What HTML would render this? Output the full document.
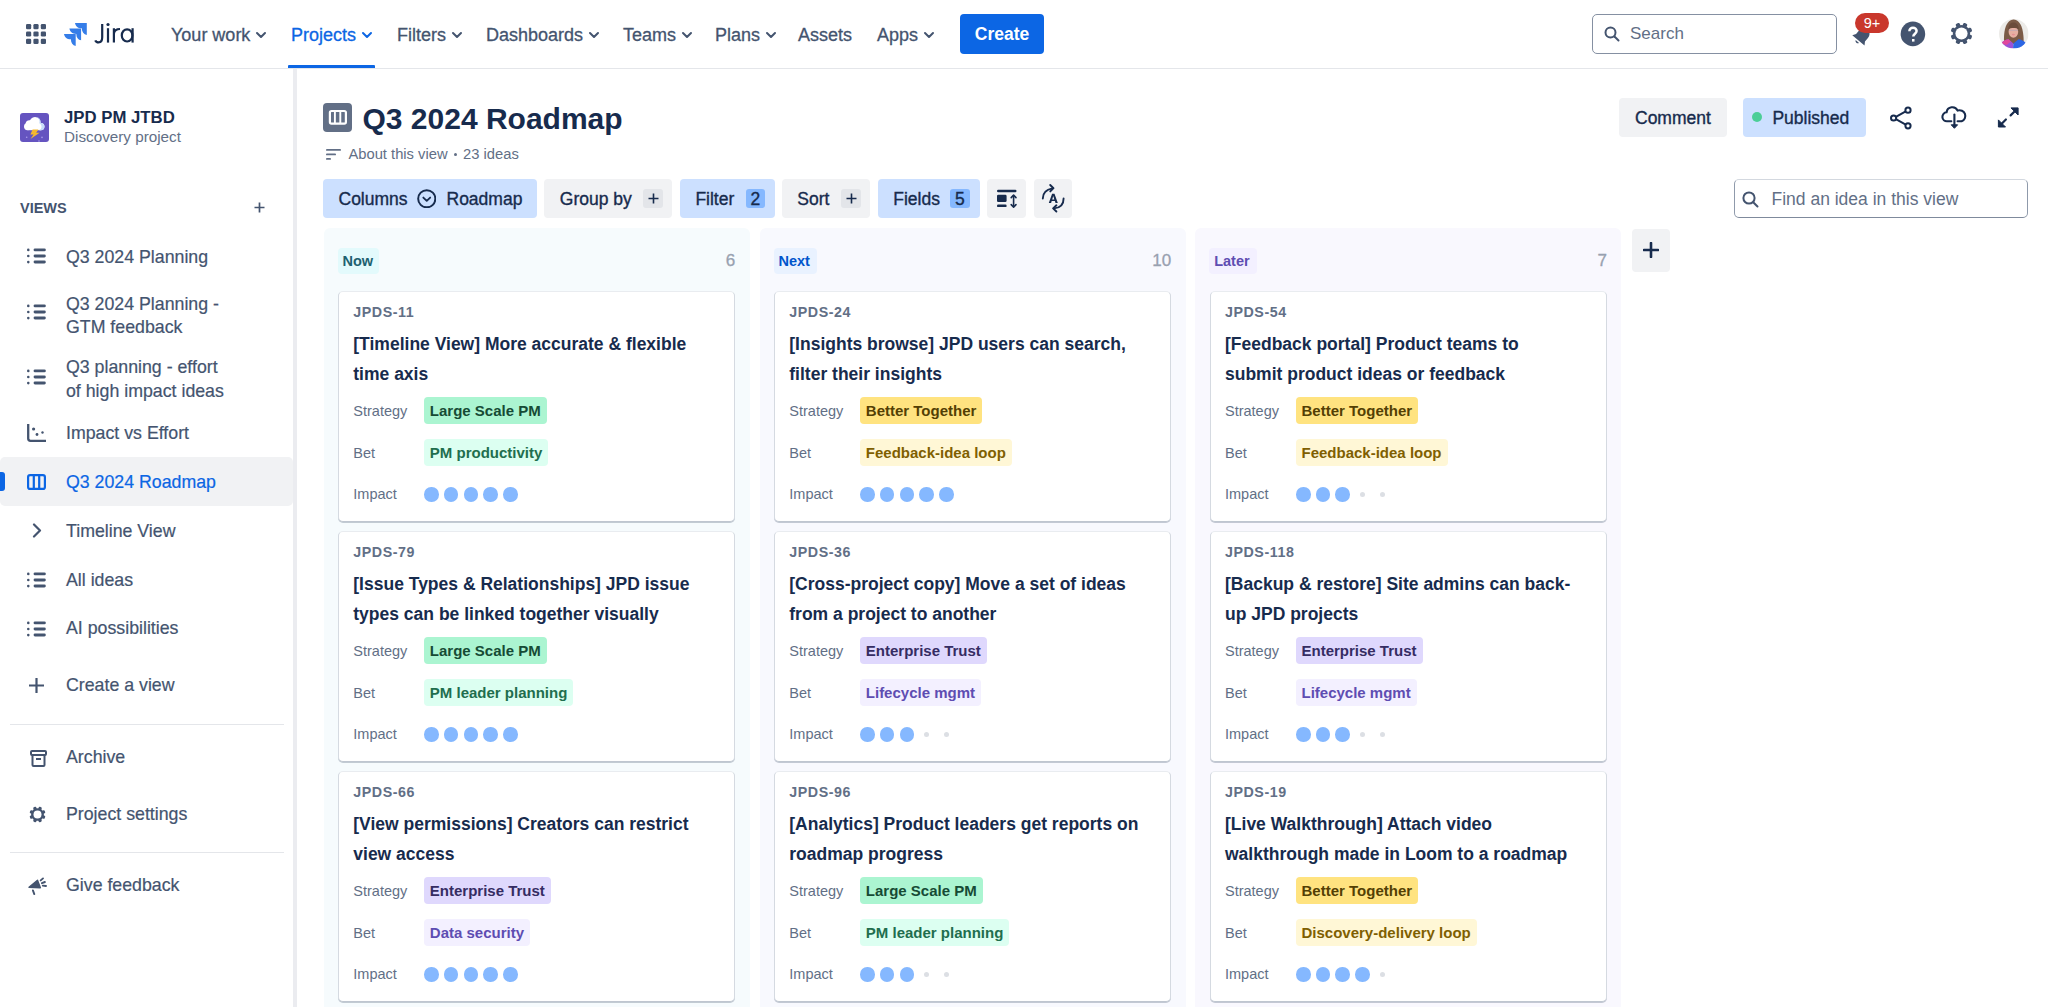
<!DOCTYPE html>
<html><head><meta charset="utf-8"><style>
*{box-sizing:border-box;margin:0;padding:0}
html,body{width:2048px;height:1007px;overflow:hidden;background:#fff;font-family:"Liberation Sans",sans-serif;color:#172B4D}
.a{position:absolute}
.t{position:absolute;white-space:nowrap}
#nav{position:absolute;left:0;top:0;width:2048px;height:69px;background:#fff;border-bottom:1px solid #E4E6EA}
.ni{position:absolute;top:24px;font-size:18px;color:#44546F;white-space:nowrap;line-height:22px;-webkit-text-stroke:0.3px currentColor}
.chev{display:inline-block;width:10px;height:6px;margin-left:6px;vertical-align:3px;overflow:visible}
#side{position:absolute;left:0;top:69px;width:293px;height:938px;background:#FFFFFF}
#sedge{position:absolute;left:293px;top:69px;width:4px;height:938px;background:#EBECF0}
.si{position:absolute;left:66px;font-size:17.75px;color:#44546F;line-height:24px;white-space:nowrap}
.btn{position:absolute;top:179.2px;height:38.5px;border-radius:4px;background:#F1F2F4}
.sel{background:#CCE0FF}
.bt{position:absolute;font-size:17.5px;line-height:22px;color:#172B4D;white-space:nowrap}
.pbox{position:absolute;top:9.5px;width:20px;height:19.5px;border-radius:3px;background:#DCDFE4}
.badge{position:absolute;top:9.5px;width:19px;height:19.5px;border-radius:3px;background:#85B8FF;font-size:17px;line-height:19.5px;text-align:center;color:#172B4D}
.col{position:absolute;top:228.3px;width:426px;height:800px;border-radius:6px}
.card{position:absolute;width:396.5px;height:231px;background:#fff;border-radius:5px;border:1px solid;border-color:#E9ECF0 #D5DAE1 #BFC6D0 #D5DAE1;box-shadow:0 1px 0.5px rgba(9,30,66,.22)}
.key{position:absolute;left:14px;font-size:14.25px;font-weight:bold;color:#626F86;line-height:18px;white-space:nowrap;letter-spacing:0.55px}
.ttl{position:absolute;left:14px;width:375px;font-size:17.5px;font-weight:bold;line-height:29.5px;color:#172B4D}
.lab{position:absolute;left:14px;font-size:14.5px;color:#626F86;line-height:18px}
.loz{position:absolute;left:85px;height:27px;padding:0 5.5px;border-radius:4px;font-size:15px;font-weight:bold;white-space:nowrap}
.loz span{position:absolute;left:5.5px;white-space:nowrap;line-height:18px}
.dot{position:absolute;width:14.5px;height:14.5px;border-radius:50%;background:#85B8FF}
.edot{position:absolute;width:5px;height:5px;border-radius:50%;background:#DCDFE4}
</style></head><body>
<div id="nav">
 <svg class="a" style="left:26px;top:24px" width="20" height="20" viewBox="0 0 20 20">
  <g fill="#44546F">
   <rect x="0" y="0" width="5.2" height="5.2" rx="1.3"/><rect x="7.4" y="0" width="5.2" height="5.2" rx="1.3"/><rect x="14.8" y="0" width="5.2" height="5.2" rx="1.3"/>
   <rect x="0" y="7.4" width="5.2" height="5.2" rx="1.3"/><rect x="7.4" y="7.4" width="5.2" height="5.2" rx="1.3"/><rect x="14.8" y="7.4" width="5.2" height="5.2" rx="1.3"/>
   <rect x="0" y="14.8" width="5.2" height="5.2" rx="1.3"/><rect x="7.4" y="14.8" width="5.2" height="5.2" rx="1.3"/><rect x="14.8" y="14.8" width="5.2" height="5.2" rx="1.3"/>
  </g>
 </svg>
 <svg class="a" style="left:64px;top:23px" width="23" height="23" viewBox="0 0 23 23">
  <g fill="#357DE8">
   <path d="M11 0 H22.8 V11.9 C19.8,11.4 17.8,9 17.8,5.3 C13.5,5.3 11.5,3 11 0 Z"/>
   <path d="M5.4 5.6 H17.1 V17.3 C14.1,16.8 12.3,14.4 12.3,10.9 C8,10.9 5.9,8.6 5.4,5.6 Z"/>
   <path d="M0 11 H11.7 V23 C8.7,22.5 6.9,20 6.9,16.3 C2.6,16.3 0.5,14 0 11 Z"/>
  </g>
 </svg>
 <svg class="a" style="left:94px;top:22px" width="42" height="22" viewBox="0 0 42 22">
  <g fill="none" stroke="#172B4D" stroke-width="2.2">
   <path d="M8.2,2 V15.3 Q8.2,20.4 4.6,20.4 Q2.1,20.4 1.3,18.3"/>
   <path d="M14,6.2 V20.6"/>
   <path d="M19.9,6.2 V20.6 M19.9,11.5 Q20.6,7 26,7"/>
   <ellipse cx="33.1" cy="13.4" rx="5.3" ry="6.1"/>
   <path d="M38.6,6.2 V20.6"/>
  </g>
  <circle cx="14" cy="2.5" r="1.6" fill="#172B4D"/>
 </svg>
 <div class="ni" style="left:171px">Your work<svg class="chev" viewBox="0 0 10 6"><path d="M1 1l4 4 4-4" fill="none" stroke="#44546F" stroke-width="2" stroke-linecap="round" stroke-linejoin="round"/></svg></div>
 <div class="ni" style="left:291px;color:#0C66E4">Projects<svg class="chev" viewBox="0 0 10 6"><path d="M1 1l4 4 4-4" fill="none" stroke="#0C66E4" stroke-width="2" stroke-linecap="round" stroke-linejoin="round"/></svg></div>
 <div class="a" style="left:288px;top:65px;width:87px;height:3px;background:#0C66E4;border-radius:1px 1px 0 0"></div>
 <div class="ni" style="left:397px">Filters<svg class="chev" viewBox="0 0 10 6"><path d="M1 1l4 4 4-4" fill="none" stroke="#44546F" stroke-width="2" stroke-linecap="round" stroke-linejoin="round"/></svg></div>
 <div class="ni" style="left:486px">Dashboards<svg class="chev" viewBox="0 0 10 6"><path d="M1 1l4 4 4-4" fill="none" stroke="#44546F" stroke-width="2" stroke-linecap="round" stroke-linejoin="round"/></svg></div>
 <div class="ni" style="left:623px">Teams<svg class="chev" viewBox="0 0 10 6"><path d="M1 1l4 4 4-4" fill="none" stroke="#44546F" stroke-width="2" stroke-linecap="round" stroke-linejoin="round"/></svg></div>
 <div class="ni" style="left:715px">Plans<svg class="chev" viewBox="0 0 10 6"><path d="M1 1l4 4 4-4" fill="none" stroke="#44546F" stroke-width="2" stroke-linecap="round" stroke-linejoin="round"/></svg></div>
 <div class="ni" style="left:798px">Assets</div>
 <div class="ni" style="left:877px">Apps<svg class="chev" viewBox="0 0 10 6"><path d="M1 1l4 4 4-4" fill="none" stroke="#44546F" stroke-width="2" stroke-linecap="round" stroke-linejoin="round"/></svg></div>
 <div class="a" style="left:960px;top:14px;width:84px;height:40px;background:#0C66E4;border-radius:4px;color:#fff;font-size:17.5px;font-weight:bold;line-height:40px;text-align:center">Create</div>
 <div class="a" style="left:1592px;top:14px;width:245px;height:40px;border:1px solid #8590A2;border-radius:5px"></div>
 <svg class="a" style="left:1604px;top:26px" width="16" height="16" viewBox="0 0 16 16"><circle cx="6.5" cy="6.5" r="5" fill="none" stroke="#44546F" stroke-width="2"/><path d="M10.5 10.5l4 4" stroke="#44546F" stroke-width="2" stroke-linecap="round"/></svg>
 <div class="a" style="left:1630px;top:23px;font-size:17px;line-height:22px;color:#626F86">Search</div>
 <svg class="a" style="left:1850px;top:24px" width="26" height="24" viewBox="0 0 26 24"><g transform="rotate(40 12 12)"><path d="M12 3.5c-3.6 0-5.8 2.8-5.8 6.2v4.6L4 17.6h16l-2.2-3.3V9.7c0-3.4-2.2-6.2-5.8-6.2z" fill="#44546F"/><path d="M9.8 19.2a2.3 2.3 0 004.4 0z" fill="#44546F"/></g></svg>
 <div class="a" style="left:1855px;top:13px;width:34px;height:20px;background:#C9372C;border-radius:10px;color:#fff;font-size:14.5px;line-height:20px;text-align:center">9+</div>
 <svg class="a" style="left:1900px;top:21px" width="26" height="26" viewBox="0 0 26 26"><circle cx="12.9" cy="12.9" r="12.3" fill="#44546F"/><path d="M9.4 10.3c0-2.2 1.6-3.6 3.6-3.6s3.6 1.4 3.6 3.4c0 2.6-3.3 2.7-3.3 5.5" fill="none" stroke="#fff" stroke-width="2.5" stroke-linecap="butt"/><rect x="12" y="18" width="2.5" height="2.6" fill="#fff"/></svg>
 <svg class="a" style="left:1950px;top:22px" width="23" height="23" viewBox="0 0 23 23"><g fill="#44546F"><circle cx="11.5" cy="11.5" r="8.6"/><rect x="9.3" y="0.6" width="4.4" height="5" rx="1.4" transform="rotate(22.5 11.5 11.5)"/><rect x="9.3" y="0.6" width="4.4" height="5" rx="1.4" transform="rotate(67.5 11.5 11.5)"/><rect x="9.3" y="0.6" width="4.4" height="5" rx="1.4" transform="rotate(112.5 11.5 11.5)"/><rect x="9.3" y="0.6" width="4.4" height="5" rx="1.4" transform="rotate(157.5 11.5 11.5)"/><rect x="9.3" y="0.6" width="4.4" height="5" rx="1.4" transform="rotate(202.5 11.5 11.5)"/><rect x="9.3" y="0.6" width="4.4" height="5" rx="1.4" transform="rotate(247.5 11.5 11.5)"/><rect x="9.3" y="0.6" width="4.4" height="5" rx="1.4" transform="rotate(292.5 11.5 11.5)"/><rect x="9.3" y="0.6" width="4.4" height="5" rx="1.4" transform="rotate(337.5 11.5 11.5)"/></g><circle cx="11.5" cy="11.5" r="6.1" fill="#fff"/></svg>
 <svg class="a" style="left:1999px;top:19.3px" width="29.5" height="29.5" viewBox="0 0 29.5 29.5"><defs><clipPath id="av"><circle cx="14.75" cy="14.75" r="14.75"/></clipPath></defs><g clip-path="url(#av)"><rect width="29.5" height="29.5" fill="#ECEBE8"/><path d="M5.2 25C4.2 14 6.2 1.2 14.6 0.6 23 1.2 25 14 24.6 25z" fill="#7B5B47"/><ellipse cx="14.4" cy="12.8" rx="4.8" ry="5.9" fill="#E6B0A2"/><path d="M9.3 10.2C9.5 5.2 12 3.6 14.5 3.6S19.6 5.2 19.8 10.2C17 8.6 12 8.6 9.3 10.2z" fill="#6B4C3B"/><path d="M9.8 11.3h9.2" stroke="#A9A7C0" stroke-width=".6"/><ellipse cx="14.4" cy="15.6" rx="1.6" ry=".8" fill="#E58F93"/><path d="M0 29.5C1 24 4.5 21 9.5 20.3L14.4 24.5 14 29.5z" fill="#9A52D6"/><path d="M2.5 24.5C4 22 6.5 20.8 9.5 20.3L12 22.5 7.5 26z" fill="#E0489C"/><path d="M14 29.5L14.4 24.5 19.5 20.3C24.5 21 28 24 29.5 29.5z" fill="#2C66E4"/></g></svg>
</div>


<div id="side"></div><div id="sedge"></div>
<svg class="a" style="left:20px;top:113px" width="29" height="29" viewBox="0 0 29 29">
<rect width="29" height="29" rx="3" fill="#6554C0"/>
<g fill="#fff"><circle cx="15" cy="9.6" r="5.6"/><circle cx="9.6" cy="11.2" r="4"/><circle cx="7.6" cy="13.6" r="3.6"/><circle cx="20.9" cy="13.6" r="3.6"/><rect x="7.6" y="10.5" width="13.3" height="6.7"/></g>
<path d="M16.6 4.1a5.6 5.6 0 014 5.8 3.6 3.6 0 01.3 7.3h-2.2a3.6 3.6 0 00.6-6.9 5.6 5.6 0 00-2.7-6.2z" fill="#C6DCFA"/>
<path d="M12.6 16.4h5.8l-2.2 3.3h3.4l-9.1 6.2 3-4.5H10.4z" fill="#F5B82E"/>
<circle cx="6.7" cy="24.2" r=".8" fill="#A99CE8"/><circle cx="22" cy="24.4" r=".8" fill="#A99CE8"/><circle cx="19" cy="28" r=".8" fill="#A99CE8"/>
</svg>
<div class="t" style="left:64px;top:107.40px;font-size:16.75px;line-height:22px;color:#172B4D;font-weight:bold;">JPD PM JTBD</div>
<div class="t" style="left:64px;top:125.62px;font-size:15.25px;line-height:22px;color:#626F86;">Discovery project</div>
<div class="t" style="left:20px;top:197.38px;font-size:14.5px;line-height:22px;color:#44546F;font-weight:bold;">VIEWS</div>
<svg class="a" style="left:254px;top:202px" width="11" height="11" viewBox="0 0 11 11"><path d="M5.5 0.5v10M0.5 5.5h10" stroke="#44546F" stroke-width="1.7"/></svg>
<div class="a" style="left:0;top:457px;width:293px;height:48.5px;background:#F1F2F4;border-radius:5px"></div>
<div class="a" style="left:0;top:472px;width:4.6px;height:19px;background:#0C66E4;border-radius:0 3px 3px 0"></div>
<svg class="a" style="left:27px;top:248px" width="19" height="16" viewBox="0 0 19 16"><g fill="#44546F">
<rect x="0" y="0.6" width="2.6" height="2.6" rx="1.3"/><rect x="0" y="6.7" width="2.6" height="2.6" rx="1.3"/><rect x="0" y="12.8" width="2.6" height="2.6" rx="1.3"/>
<rect x="6.6" y="0.4" width="12.2" height="2.9" rx="1.4"/><rect x="6.6" y="6.5" width="12.2" height="2.9" rx="1.4"/><rect x="6.6" y="12.6" width="12.2" height="2.9" rx="1.4"/></g></svg>
<div class="t" style="left:66px;top:245.35px;font-size:17.75px;line-height:24px;color:#44546F;-webkit-text-stroke:0.2px #44546F;">Q3 2024 Planning</div>
<svg class="a" style="left:27px;top:304px" width="19" height="16" viewBox="0 0 19 16"><g fill="#44546F">
<rect x="0" y="0.6" width="2.6" height="2.6" rx="1.3"/><rect x="0" y="6.7" width="2.6" height="2.6" rx="1.3"/><rect x="0" y="12.8" width="2.6" height="2.6" rx="1.3"/>
<rect x="6.6" y="0.4" width="12.2" height="2.9" rx="1.4"/><rect x="6.6" y="6.5" width="12.2" height="2.9" rx="1.4"/><rect x="6.6" y="12.6" width="12.2" height="2.9" rx="1.4"/></g></svg>
<div class="t" style="left:66px;top:292.05px;font-size:17.75px;line-height:24px;color:#44546F;-webkit-text-stroke:0.2px #44546F;">Q3 2024 Planning -</div>
<div class="t" style="left:66px;top:314.85px;font-size:17.75px;line-height:24px;color:#44546F;-webkit-text-stroke:0.2px #44546F;">GTM feedback</div>
<svg class="a" style="left:27px;top:369px" width="19" height="16" viewBox="0 0 19 16"><g fill="#44546F">
<rect x="0" y="0.6" width="2.6" height="2.6" rx="1.3"/><rect x="0" y="6.7" width="2.6" height="2.6" rx="1.3"/><rect x="0" y="12.8" width="2.6" height="2.6" rx="1.3"/>
<rect x="6.6" y="0.4" width="12.2" height="2.9" rx="1.4"/><rect x="6.6" y="6.5" width="12.2" height="2.9" rx="1.4"/><rect x="6.6" y="12.6" width="12.2" height="2.9" rx="1.4"/></g></svg>
<div class="t" style="left:66px;top:355.05px;font-size:17.75px;line-height:24px;color:#44546F;-webkit-text-stroke:0.2px #44546F;">Q3 planning - effort</div>
<div class="t" style="left:66px;top:378.85px;font-size:17.75px;line-height:24px;color:#44546F;-webkit-text-stroke:0.2px #44546F;">of high impact ideas</div>
<svg class="a" style="left:27px;top:424px" width="19" height="18" viewBox="0 0 19 18"><path d="M1.2 0v14.5a2.3 2.3 0 002.3 2.3H19" fill="none" stroke="#44546F" stroke-width="2.3"/>
<circle cx="6.6" cy="5" r="1.6" fill="#44546F"/><circle cx="10" cy="10.5" r="1.4" fill="#44546F"/><circle cx="15.5" cy="8.5" r="1.2" fill="#44546F"/></svg>
<div class="t" style="left:66px;top:420.65px;font-size:17.75px;line-height:24px;color:#44546F;-webkit-text-stroke:0.2px #44546F;">Impact vs Effort</div>
<svg class="a" style="left:27px;top:474px" width="19" height="16" viewBox="0 0 19 16"><rect x="1.1" y="1.1" width="16.8" height="13.8" rx="2" fill="none" stroke="#0C66E4" stroke-width="2.2"/><path d="M6.8 1v14M12.2 1v14" stroke="#0C66E4" stroke-width="2.2"/></svg>
<div class="t" style="left:66px;top:470.25px;font-size:17.75px;line-height:24px;color:#0C66E4;-webkit-text-stroke:0.2px #0C66E4;">Q3 2024 Roadmap</div>
<svg class="a" style="left:32px;top:523px" width="10" height="15" viewBox="0 0 10 15"><path d="M2 1.5l6 6-6 6" fill="none" stroke="#44546F" stroke-width="2.2" stroke-linecap="round" stroke-linejoin="round"/></svg>
<div class="t" style="left:66px;top:518.95px;font-size:17.75px;line-height:24px;color:#44546F;-webkit-text-stroke:0.2px #44546F;">Timeline View</div>
<svg class="a" style="left:27px;top:572px" width="19" height="16" viewBox="0 0 19 16"><g fill="#44546F">
<rect x="0" y="0.6" width="2.6" height="2.6" rx="1.3"/><rect x="0" y="6.7" width="2.6" height="2.6" rx="1.3"/><rect x="0" y="12.8" width="2.6" height="2.6" rx="1.3"/>
<rect x="6.6" y="0.4" width="12.2" height="2.9" rx="1.4"/><rect x="6.6" y="6.5" width="12.2" height="2.9" rx="1.4"/><rect x="6.6" y="12.6" width="12.2" height="2.9" rx="1.4"/></g></svg>
<div class="t" style="left:66px;top:567.75px;font-size:17.75px;line-height:24px;color:#44546F;-webkit-text-stroke:0.2px #44546F;">All ideas</div>
<svg class="a" style="left:27px;top:621px" width="19" height="16" viewBox="0 0 19 16"><g fill="#44546F">
<rect x="0" y="0.6" width="2.6" height="2.6" rx="1.3"/><rect x="0" y="6.7" width="2.6" height="2.6" rx="1.3"/><rect x="0" y="12.8" width="2.6" height="2.6" rx="1.3"/>
<rect x="6.6" y="0.4" width="12.2" height="2.9" rx="1.4"/><rect x="6.6" y="6.5" width="12.2" height="2.9" rx="1.4"/><rect x="6.6" y="12.6" width="12.2" height="2.9" rx="1.4"/></g></svg>
<div class="t" style="left:66px;top:616.35px;font-size:17.75px;line-height:24px;color:#44546F;-webkit-text-stroke:0.2px #44546F;">AI possibilities</div>
<svg class="a" style="left:29px;top:678px" width="15" height="15" viewBox="0 0 15 15"><path d="M7.5 0.5v14M0.5 7.5h14" stroke="#44546F" stroke-width="2.2" stroke-linecap="round"/></svg>
<div class="t" style="left:66px;top:673.35px;font-size:17.75px;line-height:24px;color:#44546F;-webkit-text-stroke:0.2px #44546F;">Create a view</div>
<div class="a" style="left:10px;top:724px;width:274px;height:1px;background:#E4E6EA"></div>
<svg class="a" style="left:30px;top:750px" width="17" height="17" viewBox="0 0 17 17"><g fill="none" stroke="#44546F" stroke-width="2"><rect x="1" y="1" width="15" height="4" rx="1"/><path d="M2.5 5v10a1 1 0 001 1h10a1 1 0 001-1V5M6 9h5"/></g></svg>
<div class="t" style="left:66px;top:744.85px;font-size:17.75px;line-height:24px;color:#44546F;-webkit-text-stroke:0.2px #44546F;">Archive</div>
<svg class="a" style="left:29px;top:805.5px" width="17" height="17" viewBox="0 0 23 23"><g fill="#44546F"><circle cx="11.5" cy="11.5" r="8.6"/><rect x="9.3" y="0.6" width="4.4" height="5" rx="1.4" transform="rotate(22.5 11.5 11.5)"/><rect x="9.3" y="0.6" width="4.4" height="5" rx="1.4" transform="rotate(67.5 11.5 11.5)"/><rect x="9.3" y="0.6" width="4.4" height="5" rx="1.4" transform="rotate(112.5 11.5 11.5)"/><rect x="9.3" y="0.6" width="4.4" height="5" rx="1.4" transform="rotate(157.5 11.5 11.5)"/><rect x="9.3" y="0.6" width="4.4" height="5" rx="1.4" transform="rotate(202.5 11.5 11.5)"/><rect x="9.3" y="0.6" width="4.4" height="5" rx="1.4" transform="rotate(247.5 11.5 11.5)"/><rect x="9.3" y="0.6" width="4.4" height="5" rx="1.4" transform="rotate(292.5 11.5 11.5)"/><rect x="9.3" y="0.6" width="4.4" height="5" rx="1.4" transform="rotate(337.5 11.5 11.5)"/></g><circle cx="11.5" cy="11.5" r="5.4" fill="#fff"/></svg>
<div class="t" style="left:66px;top:801.65px;font-size:17.75px;line-height:24px;color:#44546F;-webkit-text-stroke:0.2px #44546F;">Project settings</div>
<div class="a" style="left:10px;top:852px;width:274px;height:1px;background:#E4E6EA"></div>
<svg class="a" style="left:20px;top:860px" width="40" height="50" viewBox="20 860 40 50"><path d="M29 887.2L37.5 880.3 40.4 887.7Z" fill="#44546F" stroke="#44546F" stroke-width="1.4" stroke-linejoin="round"/><g stroke="#44546F" stroke-width="1.9" stroke-linecap="round"><path d="M32.9 890.4L34.3 894.1M40.7 880.4L43 878.4M41.9 883.2L44.9 882M42.8 885.6L46 886"/></g></svg>
<div class="t" style="left:66px;top:872.85px;font-size:17.75px;line-height:24px;color:#44546F;-webkit-text-stroke:0.2px #44546F;">Give feedback</div>

<svg class="a" style="left:323px;top:103px" width="29" height="29" viewBox="0 0 29 29"><rect width="29" height="29" rx="4" fill="#626F86"/><rect x="6.9" y="8" width="16" height="12.6" rx="1.6" fill="none" stroke="#fff" stroke-width="2.2"/><path d="M11.9 8.5v12M17.3 8.5v12" stroke="#fff" stroke-width="1.9"/></svg>
<div class="t" style="left:362.5px;top:100.70px;font-size:30px;line-height:36px;color:#172B4D;font-weight:bold;">Q3 2024 Roadmap</div>
<svg class="a" style="left:325.5px;top:149px" width="15" height="11" viewBox="0 0 15 11"><g fill="#626F86"><rect x="0" y="0" width="15" height="1.8" rx=".9"/><rect x="0" y="4.5" width="10" height="1.8" rx=".9"/><rect x="0" y="9" width="5" height="1.8" rx=".9"/></g></svg>
<div class="t" style="left:348.4px;top:144.64px;font-size:14.75px;line-height:18px;color:#626F86;">About this view</div>
<div class="a" style="left:453.5px;top:152.5px;width:3.5px;height:3.5px;border-radius:50%;background:#626F86"></div>
<div class="t" style="left:463px;top:144.64px;font-size:14.75px;line-height:18px;color:#626F86;">23 ideas</div>
<div class="btn sel" style="left:323px;width:214px"></div>
<div class="t" style="left:338.5px;top:187.74px;font-size:17.5px;line-height:22px;color:#172B4D;-webkit-text-stroke:0.35px #172B4D;">Columns</div>
<svg class="a" style="left:416.5px;top:188.5px" width="19.5" height="19.5" viewBox="0 0 20 20"><circle cx="10" cy="10" r="8.8" fill="none" stroke="#172B4D" stroke-width="2"/><path d="M6.5 8.8l3.5 3.4 3.5-3.4" fill="none" stroke="#172B4D" stroke-width="1.9" stroke-linecap="round" stroke-linejoin="round"/></svg>
<div class="t" style="left:446.5px;top:187.74px;font-size:17.5px;line-height:22px;color:#172B4D;-webkit-text-stroke:0.35px #172B4D;">Roadmap</div>
<div class="btn " style="left:544px;width:128px"></div>
<div class="t" style="left:559.8px;top:187.74px;font-size:17.5px;line-height:22px;color:#172B4D;-webkit-text-stroke:0.35px #172B4D;">Group by</div>
<div class="a" style="left:643px;top:188.5px;width:20px;height:19.5px;border-radius:3px;background:#E3E5E9"></div><svg class="a" style="left:647.5px;top:193px" width="11" height="11" viewBox="0 0 11 11"><path d="M5.5 0.5v10M0.5 5.5h10" stroke="#172B4D" stroke-width="1.6"/></svg>
<div class="btn sel" style="left:680px;width:95px"></div>
<div class="t" style="left:695.4px;top:187.74px;font-size:17.5px;line-height:22px;color:#172B4D;-webkit-text-stroke:0.35px #172B4D;">Filter</div>
<div class="a" style="left:746px;top:188.5px;width:19px;height:19.5px;border-radius:3px;background:#85B8FF"></div>
<div class="t" style="left:750.5px;top:187.74px;font-size:17.5px;line-height:22px;color:#172B4D;-webkit-text-stroke:0.35px #172B4D;">2</div>
<div class="btn " style="left:781.8px;width:88.0px"></div>
<div class="t" style="left:797.3px;top:187.74px;font-size:17.5px;line-height:22px;color:#172B4D;-webkit-text-stroke:0.35px #172B4D;">Sort</div>
<div class="a" style="left:841.4px;top:188.5px;width:20px;height:19.5px;border-radius:3px;background:#E3E5E9"></div><svg class="a" style="left:845.9px;top:193px" width="11" height="11" viewBox="0 0 11 11"><path d="M5.5 0.5v10M0.5 5.5h10" stroke="#172B4D" stroke-width="1.6"/></svg>
<div class="btn sel" style="left:878px;width:102px"></div>
<div class="t" style="left:893.3px;top:187.74px;font-size:17.5px;line-height:22px;color:#172B4D;-webkit-text-stroke:0.35px #172B4D;">Fields</div>
<div class="a" style="left:950px;top:188.5px;width:19.5px;height:19.5px;border-radius:3px;background:#85B8FF"></div>
<div class="t" style="left:955px;top:187.74px;font-size:17.5px;line-height:22px;color:#172B4D;-webkit-text-stroke:0.35px #172B4D;">5</div>
<div class="btn " style="left:987px;width:39px"></div>
<svg class="a" style="left:987px;top:179px" width="39" height="39" viewBox="987 179 39 39"><g fill="#172B4D"><rect x="997" y="189.8" width="19.5" height="2.5" rx="1.2"/><rect x="997" y="194.8" width="9.6" height="7.2" rx="1.3"/><rect x="997" y="204.6" width="9.6" height="2.5" rx="1.2"/></g><path d="M1013.6 195.5v11" stroke="#172B4D" stroke-width="1.6"/><path d="M1011.2 197.6l2.4-2.5 2.4 2.5M1011.2 204.6l2.4 2.5 2.4-2.5" fill="none" stroke="#172B4D" stroke-width="1.6" stroke-linejoin="round" stroke-linecap="round"/></svg>
<div class="btn " style="left:1034px;width:38px"></div>
<svg class="a" style="left:1034px;top:179px" width="38" height="39" viewBox="1034 179 38 39"><g fill="none" stroke="#172B4D" stroke-width="1.9" stroke-linecap="round" stroke-linejoin="round"><path d="M1042.8 198.6C1042.8 193 1046.5 189.5 1052.3 188.4"/><path d="M1050.2 185l3.3 3.2-3.2 3.2"/><path d="M1063.6 198.4C1063.6 204 1060.3 207.8 1054 208.4"/><path d="M1056.4 205.3l-3.3 3.1 3.3 3.1"/></g><path d="M1048.8 203l3.3-9.3h2.4l3.3 9.3h-2.3l-.6-1.9h-3.2l-.6 1.9zm3.4-3.6h2.1l-1.05-3.4z" fill="#172B4D"/></svg>
<div class="a" style="left:1619px;top:98px;width:108px;height:39px;border-radius:4px;background:#F1F2F4"></div>
<div class="t" style="left:1635px;top:106.84px;font-size:17.5px;line-height:22px;color:#172B4D;-webkit-text-stroke:0.35px #172B4D;">Comment</div>
<div class="a" style="left:1742.5px;top:98px;width:123.5px;height:39px;border-radius:4px;background:#CCE0FF"></div>
<div class="a" style="left:1752px;top:112.3px;width:10px;height:10px;border-radius:50%;background:#4BCE97"></div>
<div class="t" style="left:1772.4px;top:106.84px;font-size:17.5px;line-height:22px;color:#172B4D;-webkit-text-stroke:0.35px #172B4D;">Published</div>
<svg class="a" style="left:1889px;top:106px" width="24" height="24" viewBox="0 0 24 24"><g fill="none" stroke="#172B4D" stroke-width="2"><circle cx="4.6" cy="12" r="2.6"/><circle cx="19" cy="4.2" r="2.6"/><circle cx="19" cy="19.8" r="2.6"/><path d="M6.9 10.8l9.8-5.4M6.9 13.2l9.8 5.4"/></g></svg>
<svg class="a" style="left:1938px;top:102px" width="32" height="30" viewBox="1938 102 32 30"><path d="M1951.3 121.3H1947.2A4.5 4.5 0 0 1 1946.6 112.3A5.8 5.8 0 0 1 1957.6 110.6A5.6 5.6 0 0 1 1961.6 121.3H1957.6" fill="none" stroke="#172B4D" stroke-width="2.1" stroke-linecap="round" stroke-linejoin="round"/><path d="M1954.4 114.6V125.5" stroke="#172B4D" stroke-width="2.1" stroke-linecap="round"/><path d="M1951.2 124.8H1957.6L1954.4 128.3Z" fill="#172B4D" stroke="#172B4D" stroke-width="1" stroke-linejoin="round"/></svg>
<svg class="a" style="left:1994px;top:104px" width="28" height="28" viewBox="1994 104 28 28"><g fill="#172B4D" stroke="#172B4D" stroke-width="1" stroke-linejoin="round"><path d="M2011 107.9H2018.1V115Z"/><path d="M1998.4 119.9V127H2005.5Z"/></g><g stroke="#172B4D" stroke-width="2.2" stroke-linecap="round"><path d="M2014.8 111.2L2010.6 115.4M2001.7 123.7L2005.9 119.5"/></g></svg>
<div class="a" style="left:1733.8px;top:179.2px;width:294.5px;height:38.5px;border:1px solid;border-color:#D3D8DF #8F9AAB #7F8A9C #8F9AAB;border-radius:5px;background:#fff"></div>
<svg class="a" style="left:1742px;top:190.8px" width="17" height="17" viewBox="0 0 17 17"><circle cx="7" cy="7" r="5.6" fill="none" stroke="#44546F" stroke-width="2"/><path d="M11.2 11.2l4.3 4.3" stroke="#44546F" stroke-width="2" stroke-linecap="round"/></svg>
<div class="t" style="left:1771.5px;top:187.84px;font-size:17.5px;line-height:22px;color:#626F86;">Find an idea in this view</div>
<div class="col" style="left:323.5px;background:#F6FBFD"></div>
<div class="a" style="left:337.7px;top:248px;width:41px;height:26px;border-radius:4px;background:#E3FAFC"></div>
<div class="t" style="left:342.5px;top:252.48px;font-size:14.5px;line-height:18px;color:#1D6170;font-weight:bold;">Now</div>
<div class="t" style="left:623.5px;width:111.69999999999999px;text-align:right;top:249.61px;font-size:17px;line-height:22px;color:#98A1B0;-webkit-text-stroke:0.3px #98A1B0">6</div>
<div class="col" style="left:759.5px;background:#F8F9FE"></div>
<div class="a" style="left:773.7px;top:248px;width:43.3px;height:26px;border-radius:4px;background:#E9F2FF"></div>
<div class="t" style="left:778.5px;top:252.48px;font-size:14.5px;line-height:18px;color:#0055CC;font-weight:bold;">Next</div>
<div class="t" style="left:1059.5px;width:111.69999999999999px;text-align:right;top:249.61px;font-size:17px;line-height:22px;color:#98A1B0;-webkit-text-stroke:0.3px #98A1B0">10</div>
<div class="col" style="left:1195.2px;background:#F9F8FE"></div>
<div class="a" style="left:1209.4px;top:248px;width:47.8px;height:26px;border-radius:4px;background:#F3F0FF"></div>
<div class="t" style="left:1214.2px;top:252.48px;font-size:14.5px;line-height:18px;color:#5E4DB2;font-weight:bold;">Later</div>
<div class="t" style="left:1495.2px;width:111.69999999999999px;text-align:right;top:249.61px;font-size:17px;line-height:22px;color:#98A1B0;-webkit-text-stroke:0.3px #98A1B0">7</div>
<div class="a" style="left:1632px;top:228.5px;width:38px;height:43px;border-radius:4px;background:#F1F2F4"></div>
<svg class="a" style="left:1643px;top:242px" width="16" height="16" viewBox="0 0 16 16"><path d="M8 1v14M1 8h14" stroke="#172B4D" stroke-width="2.6" stroke-linecap="round"/></svg>
<div class="card" style="left:338.3px;top:290.5px"><div class="key" style="top:11.46px">JPDS-11</div><div class="ttl" style="top:38.69px">[Timeline View] More accurate &amp; flexible<br>time axis</div><div class="lab" style="top:110.78px">Strategy</div><div class="lab" style="top:152.28px">Bet</div><div class="lab" style="top:193.18px">Impact</div><div class="loz" style="top:105.7px;width:122.4px;background:#ABF5D1;color:#164B35"><span style="top:4.90px">Large Scale PM</span></div><div class="loz" style="top:147.2px;width:124.0px;background:#DCFFF1;color:#216E4E"><span style="top:5.60px">PM productivity</span></div><div class="dot" style="left:85.0px;top:195.55px"></div><div class="dot" style="left:104.7px;top:195.55px"></div><div class="dot" style="left:124.4px;top:195.55px"></div><div class="dot" style="left:144.1px;top:195.55px"></div><div class="dot" style="left:163.8px;top:195.55px"></div></div>
<div class="card" style="left:338.3px;top:530.5px"><div class="key" style="top:11.46px">JPDS-79</div><div class="ttl" style="top:38.69px">[Issue Types &amp; Relationships] JPD issue<br>types can be linked together visually</div><div class="lab" style="top:110.78px">Strategy</div><div class="lab" style="top:152.28px">Bet</div><div class="lab" style="top:193.18px">Impact</div><div class="loz" style="top:105.7px;width:122.4px;background:#ABF5D1;color:#164B35"><span style="top:4.90px">Large Scale PM</span></div><div class="loz" style="top:147.2px;width:149.0px;background:#DCFFF1;color:#216E4E"><span style="top:5.60px">PM leader planning</span></div><div class="dot" style="left:85.0px;top:195.55px"></div><div class="dot" style="left:104.7px;top:195.55px"></div><div class="dot" style="left:124.4px;top:195.55px"></div><div class="dot" style="left:144.1px;top:195.55px"></div><div class="dot" style="left:163.8px;top:195.55px"></div></div>
<div class="card" style="left:338.3px;top:770.5px"><div class="key" style="top:11.46px">JPDS-66</div><div class="ttl" style="top:38.69px">[View permissions] Creators can restrict<br>view access</div><div class="lab" style="top:110.78px">Strategy</div><div class="lab" style="top:152.28px">Bet</div><div class="lab" style="top:193.18px">Impact</div><div class="loz" style="top:105.7px;width:126.5px;background:#DFD8FD;color:#352C63"><span style="top:4.90px">Enterprise Trust</span></div><div class="loz" style="top:147.2px;width:105.7px;background:#F3F0FF;color:#5E4DB2"><span style="top:5.60px">Data security</span></div><div class="dot" style="left:85.0px;top:195.55px"></div><div class="dot" style="left:104.7px;top:195.55px"></div><div class="dot" style="left:124.4px;top:195.55px"></div><div class="dot" style="left:144.1px;top:195.55px"></div><div class="dot" style="left:163.8px;top:195.55px"></div></div>
<div class="card" style="left:774.3px;top:290.5px"><div class="key" style="top:11.46px">JPDS-24</div><div class="ttl" style="top:38.69px">[Insights browse] JPD users can search,<br>filter their insights</div><div class="lab" style="top:110.78px">Strategy</div><div class="lab" style="top:152.28px">Bet</div><div class="lab" style="top:193.18px">Impact</div><div class="loz" style="top:105.7px;width:122.1px;background:#FFE380;color:#533F04"><span style="top:4.90px">Better Together</span></div><div class="loz" style="top:147.2px;width:151.5px;background:#FFF7D6;color:#7F5F01"><span style="top:5.60px">Feedback-idea loop</span></div><div class="dot" style="left:85.0px;top:195.55px"></div><div class="dot" style="left:104.7px;top:195.55px"></div><div class="dot" style="left:124.4px;top:195.55px"></div><div class="dot" style="left:144.1px;top:195.55px"></div><div class="dot" style="left:163.8px;top:195.55px"></div></div>
<div class="card" style="left:774.3px;top:530.5px"><div class="key" style="top:11.46px">JPDS-36</div><div class="ttl" style="top:38.69px">[Cross-project copy] Move a set of ideas<br>from a project to another</div><div class="lab" style="top:110.78px">Strategy</div><div class="lab" style="top:152.28px">Bet</div><div class="lab" style="top:193.18px">Impact</div><div class="loz" style="top:105.7px;width:126.5px;background:#DFD8FD;color:#352C63"><span style="top:4.90px">Enterprise Trust</span></div><div class="loz" style="top:147.2px;width:120.7px;background:#F3F0FF;color:#5E4DB2"><span style="top:5.60px">Lifecycle mgmt</span></div><div class="dot" style="left:85.0px;top:195.55px"></div><div class="dot" style="left:104.7px;top:195.55px"></div><div class="dot" style="left:124.4px;top:195.55px"></div><div class="edot" style="left:148.8px;top:200.3px"></div><div class="edot" style="left:168.6px;top:200.3px"></div></div>
<div class="card" style="left:774.3px;top:770.5px"><div class="key" style="top:11.46px">JPDS-96</div><div class="ttl" style="top:38.69px">[Analytics] Product leaders get reports on<br>roadmap progress</div><div class="lab" style="top:110.78px">Strategy</div><div class="lab" style="top:152.28px">Bet</div><div class="lab" style="top:193.18px">Impact</div><div class="loz" style="top:105.7px;width:122.4px;background:#ABF5D1;color:#164B35"><span style="top:4.90px">Large Scale PM</span></div><div class="loz" style="top:147.2px;width:149.0px;background:#DCFFF1;color:#216E4E"><span style="top:5.60px">PM leader planning</span></div><div class="dot" style="left:85.0px;top:195.55px"></div><div class="dot" style="left:104.7px;top:195.55px"></div><div class="dot" style="left:124.4px;top:195.55px"></div><div class="edot" style="left:148.8px;top:200.3px"></div><div class="edot" style="left:168.6px;top:200.3px"></div></div>
<div class="card" style="left:1210.0px;top:290.5px"><div class="key" style="top:11.46px">JPDS-54</div><div class="ttl" style="top:38.69px">[Feedback portal] Product teams to<br>submit product ideas or feedback</div><div class="lab" style="top:110.78px">Strategy</div><div class="lab" style="top:152.28px">Bet</div><div class="lab" style="top:193.18px">Impact</div><div class="loz" style="top:105.7px;width:122.1px;background:#FFE380;color:#533F04"><span style="top:4.90px">Better Together</span></div><div class="loz" style="top:147.2px;width:151.5px;background:#FFF7D6;color:#7F5F01"><span style="top:5.60px">Feedback-idea loop</span></div><div class="dot" style="left:85.0px;top:195.55px"></div><div class="dot" style="left:104.7px;top:195.55px"></div><div class="dot" style="left:124.4px;top:195.55px"></div><div class="edot" style="left:148.8px;top:200.3px"></div><div class="edot" style="left:168.6px;top:200.3px"></div></div>
<div class="card" style="left:1210.0px;top:530.5px"><div class="key" style="top:11.46px">JPDS-118</div><div class="ttl" style="top:38.69px">[Backup &amp; restore] Site admins can back-<br>up JPD projects</div><div class="lab" style="top:110.78px">Strategy</div><div class="lab" style="top:152.28px">Bet</div><div class="lab" style="top:193.18px">Impact</div><div class="loz" style="top:105.7px;width:126.5px;background:#DFD8FD;color:#352C63"><span style="top:4.90px">Enterprise Trust</span></div><div class="loz" style="top:147.2px;width:120.7px;background:#F3F0FF;color:#5E4DB2"><span style="top:5.60px">Lifecycle mgmt</span></div><div class="dot" style="left:85.0px;top:195.55px"></div><div class="dot" style="left:104.7px;top:195.55px"></div><div class="dot" style="left:124.4px;top:195.55px"></div><div class="edot" style="left:148.8px;top:200.3px"></div><div class="edot" style="left:168.6px;top:200.3px"></div></div>
<div class="card" style="left:1210.0px;top:770.5px"><div class="key" style="top:11.46px">JPDS-19</div><div class="ttl" style="top:38.69px">[Live Walkthrough] Attach video<br>walkthrough made in Loom to a roadmap</div><div class="lab" style="top:110.78px">Strategy</div><div class="lab" style="top:152.28px">Bet</div><div class="lab" style="top:193.18px">Impact</div><div class="loz" style="top:105.7px;width:122.1px;background:#FFE380;color:#533F04"><span style="top:4.90px">Better Together</span></div><div class="loz" style="top:147.2px;width:180.8px;background:#FFF7D6;color:#7F5F01"><span style="top:5.60px">Discovery-delivery loop</span></div><div class="dot" style="left:85.0px;top:195.55px"></div><div class="dot" style="left:104.7px;top:195.55px"></div><div class="dot" style="left:124.4px;top:195.55px"></div><div class="dot" style="left:144.1px;top:195.55px"></div><div class="edot" style="left:168.6px;top:200.3px"></div></div>

</body></html>
